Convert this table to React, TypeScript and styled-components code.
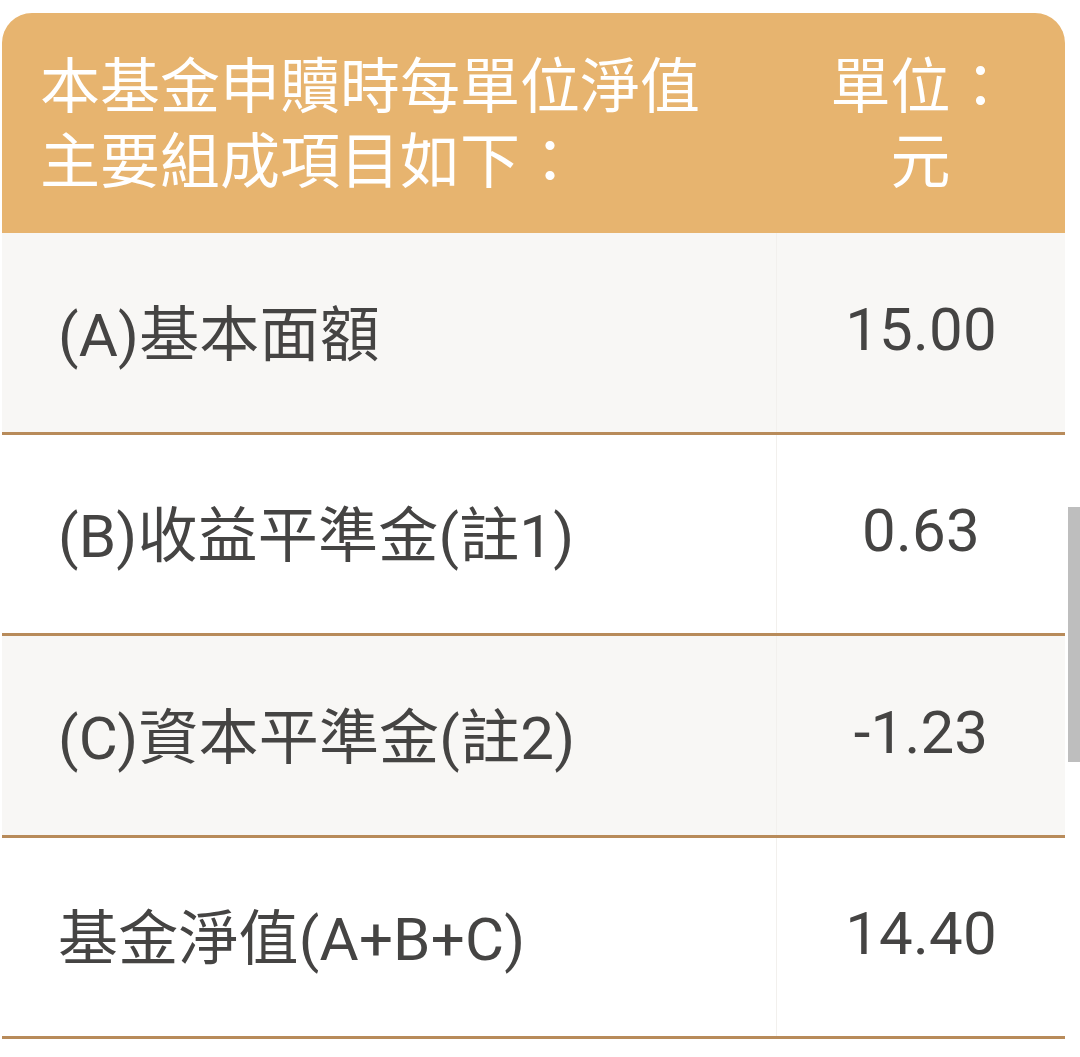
import * as React from 'react';
import styled, { createGlobalStyle } from 'styled-components';

const GlobalStyle = createGlobalStyle`
  html,
  body {
    margin: 0;
    padding: 0;
    background: #ffffff;
  }
  body {
    font-family: Roboto, 'Noto Sans CJK TC', sans-serif;
  }
`;

const Page = styled.div`
  position: relative;
  width: 1080px;
  height: 1057px;
  padding: 13px 15px 0 2px;
  box-sizing: border-box;
  overflow: hidden;
`;

const Table = styled.div`
  width: 1063px;
  border-radius: 30px 30px 0 0;
  overflow: hidden;
`;

const HeaderRow = styled.div`
  display: grid;
  grid-template-columns: 774px 1fr;
  background: #e7b46f;
  color: #ffffff;
  font-size: 60px;
  line-height: 75px;
`;

const HeaderCell = styled.div<{ $center?: boolean }>`
  padding: ${(props) => (props.$center ? '37px 36px 33px' : '37px 40px 33px 38px')};
  text-align: ${(props) => (props.$center ? 'center' : 'left')};
`;

const Row = styled.div<{ $shaded?: boolean }>`
  display: grid;
  grid-template-columns: 774px 1fr;
  height: 198.5px;
  border-bottom: 3px solid #b88b5a;
  background: ${(props) => (props.$shaded ? '#f8f7f5' : '#ffffff')};
  color: #454443;
  font-size: 60px;
  letter-spacing: 0.2px;
`;

const Cell = styled.div<{ $center?: boolean }>`
  display: flex;
  align-items: center;
  justify-content: ${(props) => (props.$center ? 'center' : 'flex-start')};
  padding-left: ${(props) => (props.$center ? '0' : '56px')};
  padding-bottom: 6px;
  box-sizing: border-box;
  border-left: ${(props) => (props.$center ? '1px solid #f2f0ed' : 'none')};
`;

const ScrollThumb = styled.div`
  position: absolute;
  right: 0;
  top: 507px;
  width: 12px;
  height: 255px;
  background: #bebebe;
`;

const rows = [
  { label: '(A)基本面額', value: '15.00' },
  { label: '(B)收益平準金(註1)', value: '0.63' },
  { label: '(C)資本平準金(註2)', value: '-1.23' },
  { label: '基金淨值(A+B+C)', value: '14.40' },
];

const App: React.FC = () => {
  return (
    <Page>
      <GlobalStyle />
      <Table>
        <HeaderRow>
          <HeaderCell>
            本基金申贖時每單位淨值
            <br />
            主要組成項目如下：
          </HeaderCell>
          <HeaderCell $center>單位：元</HeaderCell>
        </HeaderRow>
        {rows.map((row, i) => (
          <Row key={row.label} $shaded={i % 2 === 0}>
            <Cell>{row.label}</Cell>
            <Cell $center>{row.value}</Cell>
          </Row>
        ))}
      </Table>
      <ScrollThumb />
    </Page>
  );
};

export default App;
